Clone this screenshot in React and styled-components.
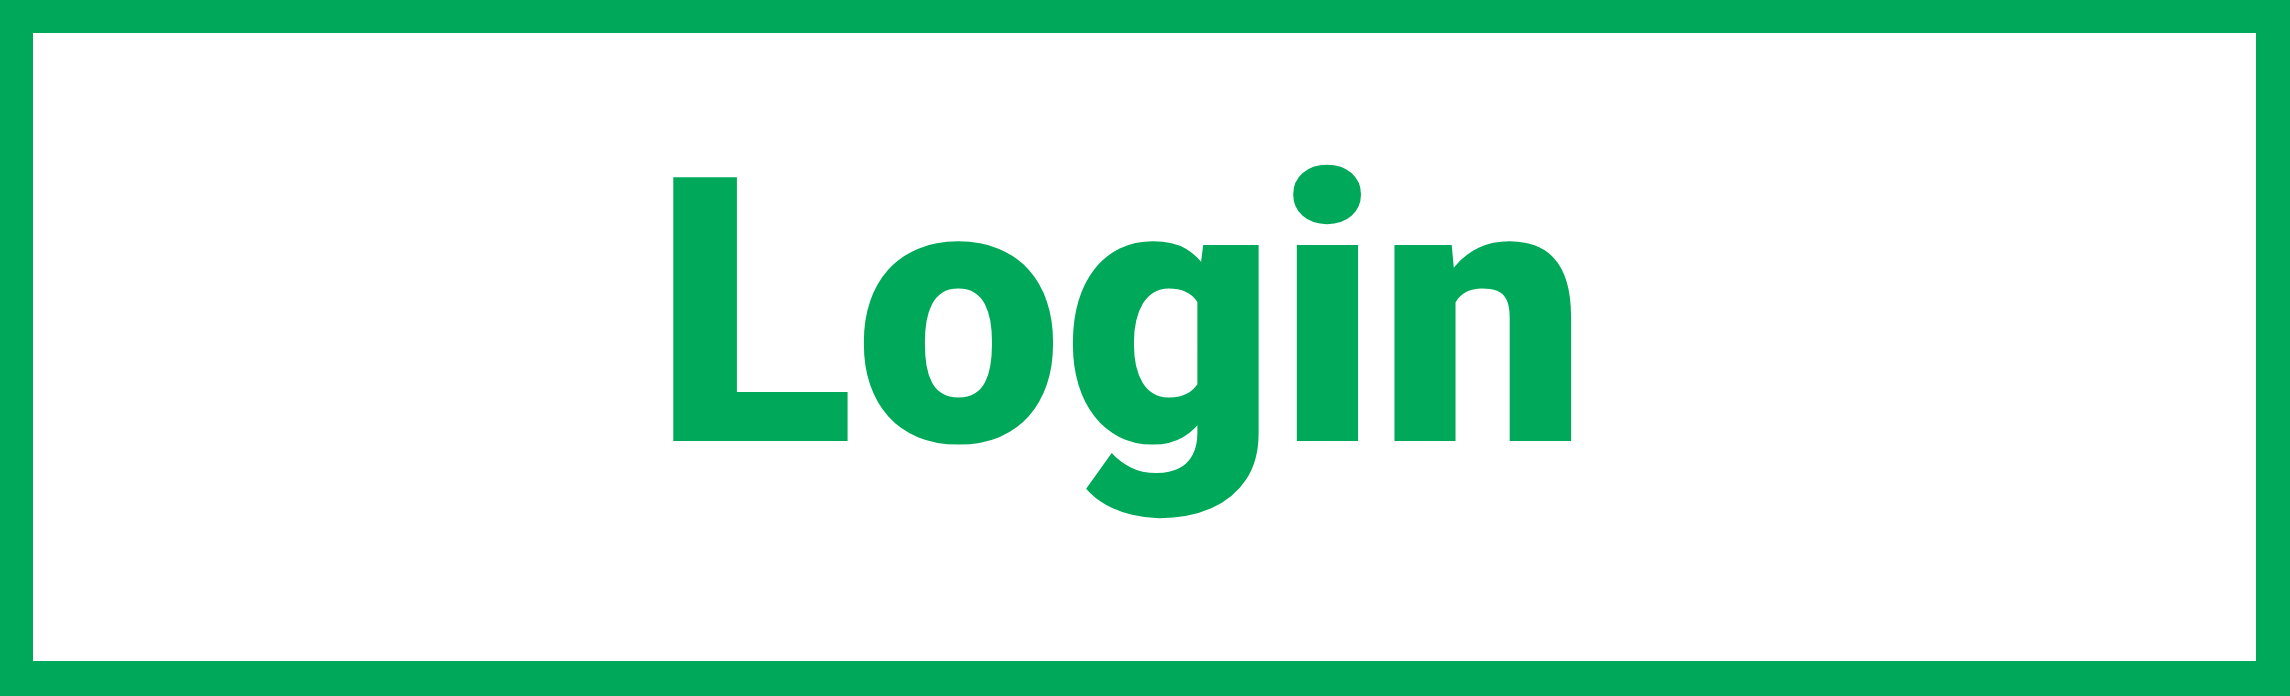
import React from "react"
import styled, { createGlobalStyle } from "styled-components"

const GlobalStyle = createGlobalStyle`
  html, body {
    margin: 0;
    padding: 0;
    background: #ffffff;
  }
`

const Frame = styled.div`
  box-sizing: border-box;
  width: 2290px;
  height: 696px;
  border: 33px solid #00a859;
  border-bottom-width: 35px;
  border-right-width: 34px;
  background: #ffffff;
  display: flex;
  justify-content: center;
  align-items: flex-start;
  padding-top: 96px;
  padding-right: 48px;
`

const Label = styled.span`
  font-family: Roboto, "Noto Sans", sans-serif;
  font-weight: 900;
  font-size: 371px;
  line-height: 371px;
  color: #00a859;
`

const App = () => (
  <>
    <GlobalStyle />
    <Frame>
      <Label>Login</Label>
    </Frame>
  </>
)

export default App
